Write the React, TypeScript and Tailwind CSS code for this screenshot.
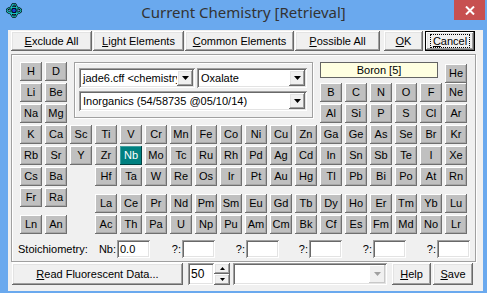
import React from "react";

const RAISED =
  "shadow-[inset_-1px_-1px_#696969,inset_1px_1px_#ffffff,inset_-2px_-2px_#a0a0a0,inset_2px_2px_#e3e3e3]";
const SUNKEN =
  "shadow-[inset_1px_1px_#a0a0a0,inset_-1px_-1px_#ffffff,inset_2px_2px_#696969,inset_-2px_-2px_#e3e3e3]";

function El({ s, sel }: { s: string; sel?: boolean }) {
  return (
    <div
      className={
        sel
          ? "flex h-[19px] w-[22px] items-center justify-center bg-[#008080] text-white shadow-[inset_-1px_-1px_#004040,inset_1px_1px_#40a0a0]"
          : "flex h-[19px] w-[22px] items-center justify-center bg-[#c0c0c0] text-black shadow-[inset_-1px_-1px_#707070,inset_1px_1px_#ffffff,inset_-2px_-2px_#a8a8a8]"
      }
    >
      {s}
    </div>
  );
}

function Arrow({ dim }: { dim?: boolean }) {
  return (
    <svg width="7" height="4" viewBox="0 0 7 4">
      <path d="M0 0h7L3.5 4z" fill={dim ? "#a0a0a0" : "#000"} />
    </svg>
  );
}

function Combo({ w, text }: { w: string; text: string }) {
  return (
    <div className={`flex h-[20px] items-stretch bg-white p-[2px] ${SUNKEN} ${w}`}>
      <div className="flex min-w-0 flex-1 items-center overflow-hidden whitespace-nowrap pl-[2px]">{text}</div>
      <div className={`flex w-[16px] shrink-0 items-center justify-center bg-[#f0f0f0] ${RAISED}`}>
        <Arrow />
      </div>
    </div>
  );
}

function Btn({
  w,
  children,
  def,
  h = "h-[20px]",
}: {
  w: string;
  children: React.ReactNode;
  def?: boolean;
  h?: string;
}) {
  if (def) {
    return (
      <div className={`${w} ${h} border border-black bg-[#f0f0f0]`}>
        <div className={`flex h-full w-full items-center justify-center ${RAISED}`}>
          <span className="border border-dotted border-black px-[2px] leading-[12px]">{children}</span>
        </div>
      </div>
    );
  }
  return (
    <div className={`flex items-center justify-center bg-[#f0f0f0] ${RAISED} ${w} ${h}`}>{children}</div>
  );
}

function Field({ text }: { text?: string }) {
  return (
    <div className={`flex h-[18px] w-[33px] items-center bg-white pl-[3px] ${SUNKEN}`}>{text}</div>
  );
}

const row4 = ["K", "Ca", "Sc", "Ti", "V", "Cr", "Mn", "Fe", "Co", "Ni", "Cu", "Zn", "Ga", "Ge", "As", "Se", "Br", "Kr"];
const row5 = ["Rb", "Sr", "Y", "Zr", "Nb", "Mo", "Tc", "Ru", "Rh", "Pd", "Ag", "Cd", "In", "Sn", "Sb", "Te", "I", "Xe"];
const row6 = ["Cs", "Ba", "", "Hf", "Ta", "W", "Re", "Os", "Ir", "Pt", "Au", "Hg", "Tl", "Pb", "Bi", "Po", "At", "Rn"];
const lan = ["La", "Ce", "Pr", "Nd", "Pm", "Sm", "Eu", "Gd", "Tb", "Dy", "Ho", "Er", "Tm", "Yb", "Lu"];
const act = ["Ac", "Th", "Pa", "U", "Np", "Pu", "Am", "Cm", "Bk", "Cf", "Es", "Fm", "Md", "No", "Lr"];

function Cell({ s }: { s: string }) {
  if (!s) return <div />;
  return <El s={s} sel={s === "Nb"} />;
}

export default function App() {
  return (
    <div className="relative h-[293px] w-[487px] overflow-hidden bg-[#6aa9ee] font-['Liberation_Sans',Arial,sans-serif] text-[11px] text-black">
      {/* title bar */}
      <div className="flex h-[30px] items-start">
        <div className="w-[33px] pl-[6px] pt-[3px]">
          <svg width="16" height="15" viewBox="0 0 16 15">
            <ellipse cx="8" cy="7.5" rx="7" ry="3" fill="none" stroke="#000" strokeWidth="2.4" />
            <ellipse cx="8" cy="7.5" rx="3" ry="6.5" fill="none" stroke="#000" strokeWidth="2.4" />
            <ellipse cx="8" cy="7.5" rx="7" ry="3" fill="none" stroke="#19c3c3" strokeWidth="1.2" />
            <ellipse cx="8" cy="7.5" rx="3" ry="6.5" fill="none" stroke="#19c3c3" strokeWidth="1.2" />
            <circle cx="8" cy="7.5" r="2.2" fill="#1a3fd8" stroke="#000" strokeWidth="0.8" />
          </svg>
        </div>
        <div className="flex-1 pt-[2px] text-center font-['Noto_Sans',sans-serif] text-[15px] leading-[20px] text-[#333333]">
          Current Chemistry [Retrieval]
        </div>
        <div className="flex w-[33px] justify-start">
          <div className="flex h-[20px] w-[31px] items-center justify-center bg-[#c75050]">
            <svg width="10" height="9" viewBox="0 0 10 9">
              <path d="M1 0.5L9 8.5M9 0.5L1 8.5" stroke="#fff" strokeWidth="2" />
            </svg>
          </div>
        </div>
      </div>

      {/* client */}
      <div className="ml-[8px] h-[261px] w-[475px] bg-[#f0f0f0] pl-[3px] pt-[1px]">
        {/* top buttons */}
        <div className="flex h-[20px] items-stretch">
          <Btn w="w-[81px]">
            <span><u>E</u>xclude All</span>
          </Btn>
          <div className="w-[1px]" />
          <Btn w="w-[91px]">
            <span><u>L</u>ight Elements</span>
          </Btn>
          <div className="w-[1px]" />
          <Btn w="w-[109px]">
            <span><u>C</u>ommon Elements</span>
          </Btn>
          <div className="w-[1px]" />
          <Btn w="w-[85px]">
            <span><u>P</u>ossible All</span>
          </Btn>
          <div className="w-[4px]" />
          <Btn w="w-[39px]">
            <span><u>O</u>K</span>
          </Btn>
          <div className="w-[2px]" />
          <Btn w="w-[50px]" def>
            <span><u>C</u>ancel</span>
          </Btn>
        </div>

        {/* group box */}
        <div className="mt-[3px] h-[208px] w-[465px] border border-[#a0a0a0] pl-[6px] pt-[7px] shadow-[inset_1px_1px_#ffffff,1px_1px_#ffffff]">
          <div className="ml-[2px] grid auto-rows-[19px] grid-cols-[repeat(18,22px)] gap-x-[3px] gap-y-[2px]">
            <div className="col-start-3 col-span-10 row-start-1 row-span-3 mx-[4px] mb-[5px] border border-[#a0a0a0] px-[4px] pt-[5px] shadow-[inset_1px_1px_#ffffff,1px_1px_#ffffff]">
              <div className="flex gap-[2px]">
                <Combo w="w-[116px]" text="jade6.cff <chemistry" />
                <Combo w="w-[110px]" text="Oxalate" />
              </div>
              <div className="mt-[3px]">
                <Combo w="w-[228px]" text="Inorganics (54/58735 @05/10/14)" />
              </div>
            </div>
            <div className="col-start-13 col-span-5 row-start-1 flex h-[16px] w-[118px] items-center justify-center border border-[#646464] bg-[#ffffe1]">
              Boron [5]
            </div>
            <El s="H" />
            <El s="D" />
            <div className="mt-[2px]">
              <El s="He" />
            </div>
            {["Li", "Be", "B", "C", "N", "O", "F", "Ne", "Na", "Mg", "Al", "Si", "P", "S", "Cl", "Ar"].map((s) => (
              <Cell key={s} s={s} />
            ))}
            {row4.map((s) => (
              <Cell key={s} s={s} />
            ))}
            {row5.map((s) => (
              <Cell key={s} s={s} />
            ))}
            {row6.map((s, i) => (
              <Cell key={s + i} s={s} />
            ))}
          </div>

          {/* lower section */}
          <div className="ml-[2px] mt-[2px] flex">
            <div className="flex flex-col gap-[8px]">
              <div className="flex gap-[3px]">
                <El s="Fr" />
                <El s="Ra" />
              </div>
              <div className="flex gap-[3px]">
                <El s="Ln" />
                <El s="An" />
              </div>
            </div>
            <div className="ml-[28px] mt-[6px] flex flex-col gap-[2px]">
              <div className="flex gap-[3px]">
                {lan.map((s) => (
                  <El key={s} s={s} />
                ))}
              </div>
              <div className="flex gap-[3px]">
                {act.map((s) => (
                  <El key={s} s={s} />
                ))}
              </div>
            </div>
          </div>

          {/* stoichiometry */}
          <div className="mt-[6px] flex items-center">
            <div className="flex w-[99px] justify-between pr-[1px]">
              <span>Stoichiometry:</span>
              <span>Nb:</span>
            </div>
            <Field text="0.0" />
            <div className="w-[32px] pr-[1px] text-right">?:</div>
            <Field />
            <div className="w-[31px] pr-[1px] text-right">?:</div>
            <Field />
            <div className="w-[30px] pr-[1px] text-right">?:</div>
            <Field />
            <div className="w-[31px] pr-[1px] text-right">?:</div>
            <Field />
            <div className="w-[31px] pr-[1px] text-right">?:</div>
            <Field />
          </div>
        </div>

        {/* bottom row */}
        <div className="mt-[1px] ml-[1px] flex h-[22px] items-stretch">
          <Btn w="w-[171px]" h="h-[22px]">
            <span><u>R</u>ead Fluorescent Data...</span>
          </Btn>
          <div className="ml-[5px] flex">
            <div className={`flex w-[26px] items-center bg-white pl-[3px] text-[12px] ${SUNKEN}`}>50</div>
            <div className="flex w-[16px] flex-col">
              <div className={`flex h-[11px] items-center justify-center bg-[#f0f0f0] ${RAISED}`}>
                <svg width="5" height="3" viewBox="0 0 5 3"><path d="M0 3h5L2.5 0z" fill="#000" /></svg>
              </div>
              <div className={`flex h-[11px] items-center justify-center bg-[#f0f0f0] ${RAISED}`}>
                <svg width="5" height="3" viewBox="0 0 5 3"><path d="M0 0h5L2.5 3z" fill="#000" /></svg>
              </div>
            </div>
          </div>
          <div className={`ml-[3px] flex w-[154px] items-stretch bg-white p-[2px] ${SUNKEN}`}>
            <div className="flex-1" />
            <div className="flex w-[16px] items-center justify-center bg-[#f0f0f0] shadow-[inset_-1px_-1px_#c8c8c8,inset_1px_1px_#ffffff]">
              <Arrow dim />
            </div>
          </div>
          <div className="ml-[5px]">
            <Btn w="w-[39px]" h="h-[22px]">
              <span><u>H</u>elp</span>
            </Btn>
          </div>
          <div className="ml-[2px]">
            <Btn w="w-[40px]" h="h-[22px]">
              <span><u>S</u>ave</span>
            </Btn>
          </div>
        </div>
      </div>
    </div>
  );
}
